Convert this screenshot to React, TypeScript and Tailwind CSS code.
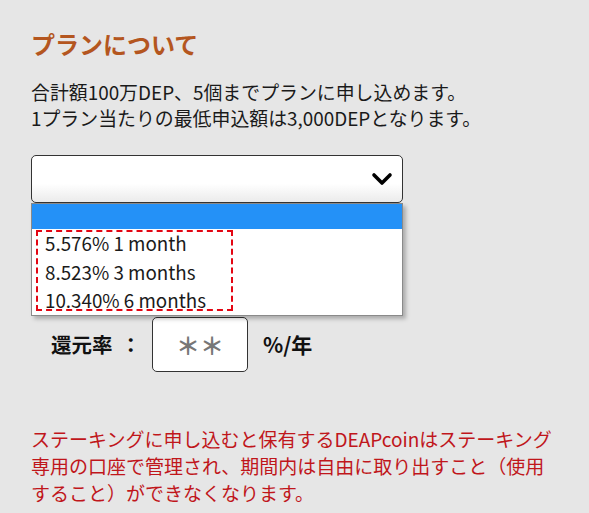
import React from "react";

export default function App() {
  return (
    <div className="w-[589px] h-[513px] overflow-hidden bg-[#e6e6e6] pl-[31px] pt-[28px] font-['Noto_Sans_CJK_JP','Noto_Sans',sans-serif]">
      <h2 className="text-[24px] leading-[32px] font-bold text-[#b4561f]">プランについて</h2>
      <p className="mt-[19px] text-[18.9px] leading-[26px] text-[#1a1a1a] whitespace-nowrap">
        合計額100万DEP、5個までプランに申し込めます。
        <br />
        1プラン当たりの最低申込額は3,000DEPとなります。
      </p>

      <div className="relative mt-[24px] w-[372px]">
        <div className="h-[48px] rounded-[5px] border border-[#333] bg-gradient-to-b from-white from-60% to-[#ebebeb] flex items-center justify-end pr-[9px]">
          <svg width="22" height="14" viewBox="0 0 22 14">
            <path d="M3 3 L11 11 L19 3" fill="none" stroke="#000" strokeWidth="3.6" strokeLinecap="round" strokeLinejoin="round" />
          </svg>
        </div>
        <div className="absolute left-0 top-[48px] w-[372px] border border-[#8a8a8a] bg-white shadow-[3px_3px_4px_rgba(0,0,0,0.25)]">
          <div className="h-[25px] bg-[#2491f7]" />
          <div className="relative text-[18.8px] leading-[28.5px] text-[#1a1a1a]">
            <div className="h-[28.5px] pl-[13px]">5.576% 1 month</div>
            <div className="h-[28.5px] pl-[13px]">8.523% 3 months</div>
            <div className="h-[28.5px] pl-[13px]">10.340% 6 months</div>
            <div className="absolute left-[4px] top-[1px] w-[197px] h-[81px] border-[2.5px] border-dashed border-[#e30613]" />
          </div>
        </div>
      </div>

      <div className="mt-[114px] flex items-center pl-[20px] h-[55px]">
        <span className="text-[20.5px] font-bold text-[#111]">還元率</span>
        <span className="ml-[8px] text-[20.5px] font-bold text-[#111]">：</span>
        <div className="ml-[11px] h-[55px] w-[96px] rounded-[5px] border border-[#333] bg-white flex items-center justify-center text-[24px] font-bold text-[#777]">
          ＊＊
        </div>
        <span className="ml-[15px] text-[21px] font-bold text-[#111]">%/年</span>
      </div>

      <p className="mt-[53px] text-[19px] leading-[27px] text-[#c0161b] whitespace-nowrap">
        ステーキングに申し込むと保有するDEAPcoinはステーキング
        <br />
        専用の口座で管理され、期間内は自由に取り出すこと（使用
        <br />
        すること）ができなくなります。
      </p>
    </div>
  );
}
